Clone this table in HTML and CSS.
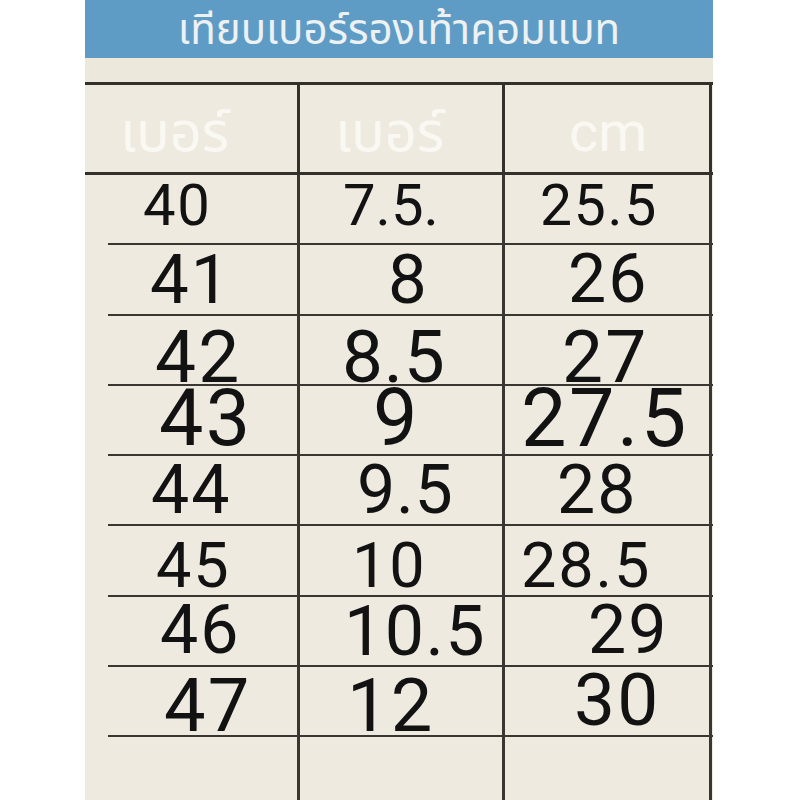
FILE: index.html
```html
<!DOCTYPE html>
<html lang="th">
<head>
<meta charset="utf-8">
<title>เทียบเบอร์รองเท้าคอมแบท</title>
<link rel="stylesheet" href="styles.css">
</head>
<body>
<div class="sheet">
  <div class="title">เทียบเบอร์รองเท้าคอมแบท</div>
  <div class="gap"></div>
  <div class="table">
    <div class="row head">
      <div class="h h1">เบอร์</div>
      <div class="h h2">เบอร์</div>
      <div class="h h3">cm</div>
    </div>
    <div class="row data">
      <div class="n r1c1">40</div><div class="n r1c2">7.5.</div><div class="n r1c3">25.5</div>
    </div>
    <div class="row data">
      <div class="n r2c1">41</div><div class="n r2c2">8</div><div class="n r2c3">26</div>
    </div>
    <div class="row data">
      <div class="n r3c1">42</div><div class="n r3c2">8.5</div><div class="n r3c3">27</div>
    </div>
    <div class="row data">
      <div class="n r4c1">43</div><div class="n r4c2">9</div><div class="n r4c3">27.5</div>
    </div>
    <div class="row data">
      <div class="n r5c1">44</div><div class="n r5c2">9.5</div><div class="n r5c3">28</div>
    </div>
    <div class="row data">
      <div class="n r6c1">45</div><div class="n r6c2">10</div><div class="n r6c3">28.5</div>
    </div>
    <div class="row data">
      <div class="n r7c1">46</div><div class="n r7c2">10.5</div><div class="n r7c3">29</div>
    </div>
    <div class="row data">
      <div class="n r8c1">47</div><div class="n r8c2">12</div><div class="n r8c3">30</div>
    </div>
    <div class="row data empty">
      <div class="n"></div><div class="n"></div><div class="n"></div>
    </div>
  </div>
</div>
</body>
</html>
```
FILE: styles.css
```css
html, body {
  margin: 0;
  padding: 0;
  background: #ffffff;
}

.sheet {
  margin-left: 85px;
  width: 628px;
  height: 800px;
  background: #eeeadf;
  overflow: hidden;
  display: flex;
  flex-direction: column;
}

.title {
  box-sizing: border-box;
  height: 58px;
  padding-top: 10px;
  background: #5e9cc5;
  color: #edf1f2;
  font-family: "Noto Sans Thai", "Noto Sans Thai Looped", "Loma", "Garuda", "Noto Sans", sans-serif;
  font-size: 42px;
  line-height: 42px;
  text-align: center;
  white-space: nowrap;
  box-shadow: 0 1px 2px rgba(120, 160, 190, 0.6);
}

.gap {
  height: 24px;
  background: #ece8dc;
}

.table {
  flex: 1;
  display: flex;
  flex-direction: column;
  border-top: 3px solid #34302c;
}

.row {
  display: grid;
  box-sizing: border-box;
}

.head {
  height: 90px;
  grid-template-columns: 215px 205px 207px;
  border-bottom: 3px solid #34302c;
}

.data {
  margin-left: 23px;
  height: 70.3px;
  grid-template-columns: 192px 205px 207px;
  border-bottom: 2px solid #3a3632;
}

.data.empty {
  flex: 1;
  border-bottom: none;
}

.h {
  border-right: 3px solid #34302c;
  color: #faf8f3;
  font-family: "Noto Sans Thai", "Noto Sans Thai Looped", "Loma", "Garuda", "Noto Sans", sans-serif;
  font-size: 56px;
  line-height: 1;
  padding-top: 21px;
  white-space: nowrap;
}

.h1 { padding-left: 35px; }
.h2 { padding-left: 35px; }
.h3 {
  font-family: Roboto, "Liberation Sans", sans-serif;
  font-size: 56px;
  padding-left: 64px;
  padding-top: 19px;
}

.n {
  border-right: 3px solid #3a3632;
  font-family: Roboto, "Liberation Sans", sans-serif;
  color: #121212;
  line-height: 0.72;
  letter-spacing: 0.03em;
  white-space: nowrap;
}

.r1c1 { font-size: 58px; padding: 10px 0 0 35px; }
.r1c2 { font-size: 58px; padding: 10px 0 0 43px; letter-spacing: 0; }
.r1c3 { font-size: 57px; padding: 10px 0 0 35px; }

.r2c1 { font-size: 69px; padding: 10px 0 0 42px; }
.r2c2 { font-size: 69px; padding: 10px 0 0 88px; }
.r2c3 { font-size: 68px; padding: 10px 0 0 63px; }

.r3c1 { font-size: 73px; padding: 15px 0 0 47px; }
.r3c2 { font-size: 73px; padding: 15px 0 0 42px; letter-spacing: 0.01em; }
.r3c3 { font-size: 73px; padding: 15px 0 0 57px; }

.r4c1 { font-size: 79px; padding: 4px 0 0 51px; }
.r4c2 { font-size: 79px; padding: 4px 0 0 73px; }
.r4c3 { font-size: 81px; padding: 4px 0 0 16px; }

.r5c1 { font-size: 68px; padding: 10px 0 0 43px; }
.r5c2 { font-size: 68px; padding: 10px 0 0 57px; letter-spacing: 0.01em; }
.r5c3 { font-size: 68px; padding: 10px 0 0 52px; }

.r6c1 { font-size: 63px; padding: 17px 0 0 48px; }
.r6c2 { font-size: 63px; padding: 17px 0 0 52px; }
.r6c3 { font-size: 63px; padding: 17px 0 0 16px; }

.r7c1 { font-size: 68px; padding: 9px 0 0 52px; }
.r7c2 { font-size: 70px; padding: 9px 0 0 44px; letter-spacing: 0.02em; }
.r7c3 { font-size: 68px; padding: 9px 0 0 83px; }

.r8c1 { font-size: 74px; padding: 12px 0 0 56px; }
.r8c2 { font-size: 74px; padding: 12px 0 0 47px; }
.r8c3 { font-size: 73px; padding: 7px 0 0 69px; }
```
